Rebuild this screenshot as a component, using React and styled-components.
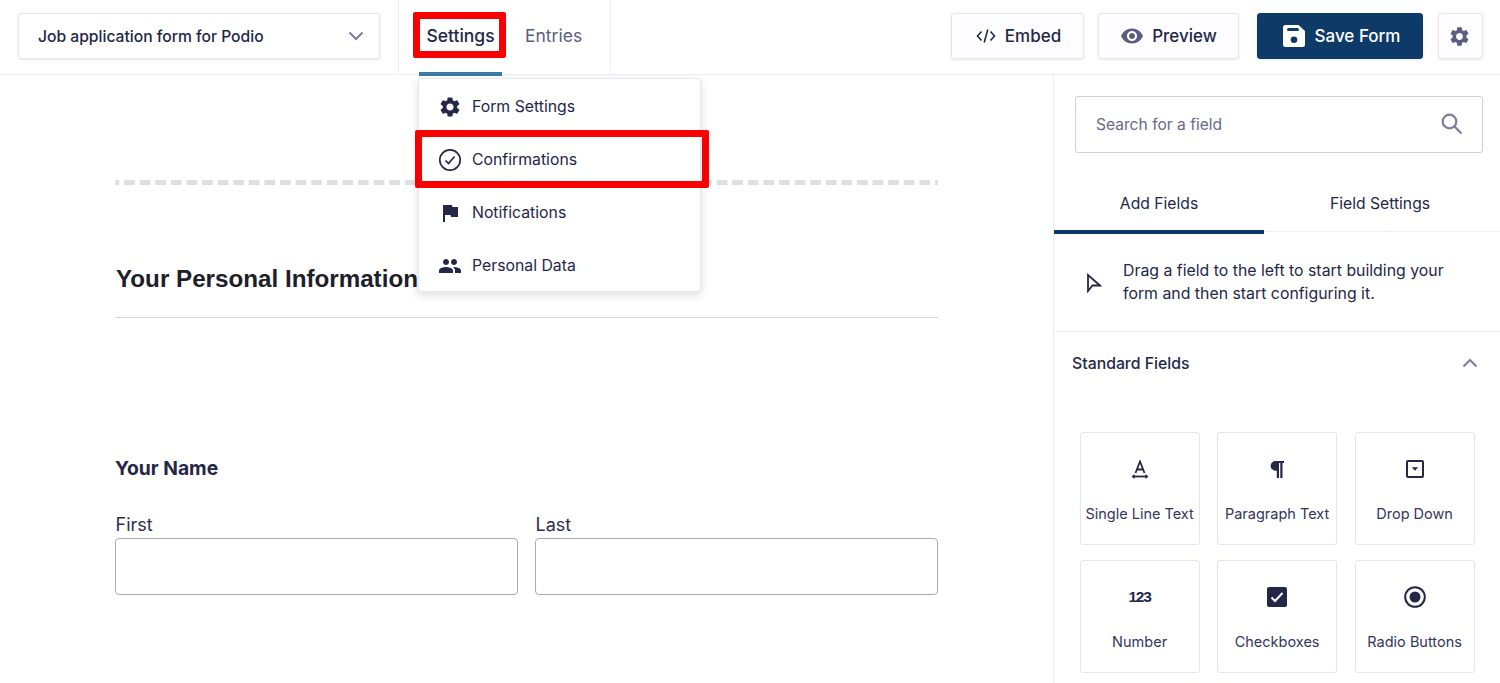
import React from "react";
import styled, { createGlobalStyle } from "styled-components";
import { MdSettings, MdFlag, MdPeople, MdVisibility } from "react-icons/md";

const INK = "#242748";
const MUTED = "#5b5e80";
const SOFT = "#7b7d9c";
const LINE = "#ecedf8";
const NAVY = "#0e3a68";
const RED = "#fa0000";

const GlobalStyle = createGlobalStyle`
  * { box-sizing: border-box; }
  html, body { margin: 0; padding: 0; background: #fff; }
  body {
    font-family: Inter, "Liberation Sans", sans-serif;
    color: ${INK};
    overflow: hidden;
  }
`;

const Page = styled.div`
  width: 1500px;
  height: 683px;
  overflow: hidden;
  display: flex;
  flex-direction: column;
`;

const Header = styled.header`
  height: 75px;
  flex: none;
  display: flex;
  align-items: stretch;
  border-bottom: 1px solid ${LINE};
  padding: 0 17px 0 18px;
`;

const FormSelect = styled.div`
  width: 362px;
  height: 46px;
  margin-top: 13px;
  padding: 0 15px 0 19px;
  display: flex;
  align-items: center;
  justify-content: space-between;
  background: #fff;
  border: 1px solid #e4e5ef;
  border-radius: 3px;
  box-shadow: 0 1px 3px rgba(40, 43, 80, 0.1);
  font-size: 15.65px;
  font-weight: 500;
`;

const Nav = styled.nav`
  position: relative;
  width: 213px;
  margin-left: 18px;
  padding-left: 20px;
  display: flex;
  align-items: stretch;
  border-left: 1px solid ${LINE};
  border-right: 1px solid ${LINE};
`;

const NavTab = styled.div`
  position: relative;
  flex: none;
  width: ${(p) => (p.$active ? "83px" : "auto")};
  margin-right: 23px;
  padding-bottom: 3px;
  display: flex;
  align-items: center;
  justify-content: center;
  font-size: 17.5px;
  font-weight: ${(p) => (p.$active ? 500 : 400)};
  color: ${(p) => (p.$active ? INK : MUTED)};
  ${(p) => p.$active && "border-bottom: 4px solid #3b7ba8; padding-bottom: 2px; height: 76px;"}
`;

const Highlight = styled.div`
  position: absolute;
  border: 7px solid ${RED};
  border-radius: 2px;
  pointer-events: none;
  z-index: 5;
`;

const TabHighlight = styled(Highlight)`
  left: -6px;
  top: 12px;
  width: 93px;
  height: 46px;
`;

const Menu = styled.div`
  position: absolute;
  left: 19px;
  top: 78px;
  width: 283px;
  height: 214px;
  padding-top: 1px;
  background: #fff;
  border: 1px solid #e6e7f0;
  border-radius: 3px;
  box-shadow: 0 3px 8px rgba(40, 43, 80, 0.16);
  z-index: 4;
`;

const MenuItem = styled.div`
  height: 53px;
  padding-left: 19px;
  display: flex;
  align-items: center;
  gap: 10px;
  font-size: 15.8px;
  color: ${INK};
  svg { flex: none; }
`;

const MenuHighlight = styled(Highlight)`
  left: -4px;
  top: 51px;
  width: 294px;
  height: 58px;
`;

const Actions = styled.div`
  margin-left: auto;
  display: flex;
  align-items: flex-start;
  padding-top: 13px;
`;

const Button = styled.button`
  height: 46px;
  width: ${(p) => p.$w}px;
  margin-left: ${(p) => p.$ml}px;
  padding: 0 ${(p) => p.$pr || 0}px 0 ${(p) => p.$pl || 0}px;
  display: flex;
  align-items: center;
  justify-content: center;
  gap: ${(p) => p.$gap || 8}px;
  background: ${(p) => (p.$primary ? NAVY : "#fdfdff")};
  color: ${(p) => (p.$primary ? "#fff" : INK)};
  border: 1px solid ${(p) => (p.$primary ? NAVY : "#e4e5ef")};
  border-radius: 3px;
  box-shadow: 0 1px 3px rgba(40, 43, 80, 0.1);
  font-family: inherit;
  font-size: 17px;
  font-weight: 500;
`;

const Body = styled.div`
  flex: 1;
  display: flex;
  min-height: 0;
`;

const Canvas = styled.main`
  width: 1053px;
  flex: none;
  padding: 105px 115px 0;
`;

const DashedLine = styled.div`
  height: 5px;
  background: linear-gradient(to right, #dfdfe2 11px, transparent 11px) -6.5px 0 / 15.6px 100% repeat-x;
`;

const SectionTitle = styled.h2`
  margin: 79px 0 0;
  padding: 0 0 23px 1px;
  height: 54px;
  line-height: 30px;
  font-family: "Liberation Sans", Arial, sans-serif;
  font-size: 24.2px;
  font-weight: 700;
  color: #1d2029;
  border-bottom: 1px solid #d6d7dd;
`;

const FieldLabel = styled.div`
  margin-top: 138px;
  line-height: 24px;
  font-size: 19.3px;
  font-weight: 700;
`;

const NameRow = styled.div`
  margin-top: 33px;
  display: grid;
  grid-template-columns: 403px 403px;
  column-gap: 17px;
`;

const NameLabel = styled.div`
  font-size: 18px;
  line-height: 24px;
  height: 25px;
  padding-left: 0.5px;
  color: #2c2f4e;
`;

const TextBox = styled.div`
  height: 57px;
  border: 1px solid #a8a9bb;
  border-radius: 4px;
`;

const Sidebar = styled.aside`
  flex: 1;
  border-left: 1px solid ${LINE};
`;

const SearchBox = styled.div`
  height: 57px;
  margin: 21px 17px 0 21px;
  padding: 0 19px 1px 20px;
  display: flex;
  align-items: center;
  justify-content: space-between;
  border: 1px solid #cfd0de;
  border-radius: 3px;
  font-size: 15.6px;
  color: #686a88;
`;

const SideTabs = styled.div`
  margin-top: 22px;
  height: 57px;
  display: flex;
  border-bottom: 1px solid ${LINE};
`;

const SideTab = styled.div`
  width: ${(p) => p.$w}px;
  height: ${(p) => (p.$active ? 59 : 56)}px;
  display: flex;
  align-items: center;
  justify-content: center;
  font-size: 15.7px;
  ${(p) => p.$active && `padding-top: 1px; border-bottom: 4px solid ${NAVY};`}
`;

const Hint = styled.div`
  height: 100px;
  padding: 27px 0 0 32px;
  display: flex;
  gap: 21px;
  border-bottom: 1px solid ${LINE};
  font-size: 15.85px;
  line-height: 23px;
  svg { margin-top: 14px; flex: none; }
`;

const GroupHeader = styled.div`
  height: 63px;
  padding: 0 22px 1px 18px;
  display: flex;
  align-items: center;
  justify-content: space-between;
  font-size: 15.8px;
  font-weight: 500;
`;

const FieldGrid = styled.div`
  margin: 37px 25px 0 25.6px;
  display: grid;
  grid-template-columns: 120px 120px 120px;
  grid-auto-rows: 113px;
  column-gap: 17.5px;
  row-gap: 15px;
`;

const FieldCard = styled.div`
  display: flex;
  flex-direction: column;
  align-items: center;
  border: 1px solid #e3e4f0;
  border-radius: 3px;
  font-size: 14.5px;
  color: #33365a;
  white-space: nowrap;
`;

const FieldIcon = styled.div`
  height: 72px;
  width: 100%;
  display: flex;
  align-items: center;
  justify-content: center;
  color: ${INK};
`;

const NumberGlyph = styled.span`
  font-family: "Liberation Sans", sans-serif;
  font-size: 15.5px;
  font-weight: 700;
  letter-spacing: -1.2px;
`;

const Chevron = ({ up }) => (
  <svg width="16" height="10" viewBox="0 0 16 10" fill="none" stroke={SOFT} strokeWidth="2">
    <path d={up ? "M1.500 8.500 8 2l6.500 6.500" : "M1.500 1.500 8 8l6.500-6.500"} />
  </svg>
);

const CheckCircle = () => (
  <svg width="24" height="24" viewBox="0 0 24 24" fill="none" stroke={INK} strokeWidth="1.700">
    <circle cx="12" cy="12" r="10.200" />
    <path d="m7.500 12.500 3 3 6-7" />
  </svg>
);

const CodeIcon = () => (
  <svg width="20" height="16" viewBox="0 0 20 16" fill="none" stroke={INK} strokeWidth="1.600">
    <path d="M5.500 3.500 1.500 8l4 4.500M14.500 3.500l4 4.500-4 4.500M11.800 1.500 8.200 14.500" />
  </svg>
);

const SaveIcon = () => (
  <svg width="22" height="22" viewBox="0 0 22 22">
    <path
      fill="#fff"
      fillRule="evenodd"
      d="M2.500 0h13L22 6v13.500a2.500 2.500 0 0 1-2.500 2.500h-17A2.500 2.500 0 0 1 0 19.500v-17A2.500 2.500 0 0 1 2.500 0ZM5.500 3a1.500 1.500 0 0 0 0 3h9a1.500 1.500 0 0 0 0-3h-9ZM11 11.500a3.300 3.300 0 1 0 0 6.600 3.300 3.300 0 0 0 0-6.600Z"
    />
  </svg>
);

const SearchIcon = () => (
  <svg width="22" height="22" viewBox="0 0 22 22" fill="none" stroke={SOFT} strokeWidth="2.200">
    <circle cx="8.500" cy="8.500" r="6.800" />
    <path d="m13.500 13.500 7 7" />
  </svg>
);

const CursorIcon = () => (
  <svg width="16" height="20" viewBox="0 0 16 20" fill="none" stroke={INK} strokeWidth="1.800">
    <path d="M2 2v16l4.500-5.500H14Z" />
  </svg>
);

const SingleLineIcon = () => (
  <svg width="18" height="19" viewBox="0 0 18 19" fill="none" stroke={INK} strokeWidth="1.800">
    <path d="M4.500 13 9 1.500 13.500 13M6 9.500h6" />
    <path d="M2 16.500h14" />
    <path d="M3.500 14v5L.5 16.500ZM14.500 14v5l3-2.500Z" fill={INK} stroke="none" />
  </svg>
);

const PilcrowIcon = () => (
  <svg width="14" height="17" viewBox="0 0 14 17">
    <path fill={INK} d="M5.500 0H14v2h-1.500v15h-2.200V2H9v15H6.800V9.800h-1.300a4.900 4.900 0 0 1 0-9.800Z" />
  </svg>
);

const DropDownIcon = () => (
  <svg width="18" height="18" viewBox="0 0 18 18" fill="none">
    <rect x="1" y="1" width="16" height="16" rx="1" stroke={INK} strokeWidth="2" />
    <path d="M5.800 7.200h6.400L9 10.800Z" fill={INK} />
  </svg>
);

const CheckboxIcon = () => (
  <svg width="20" height="20" viewBox="0 0 20 20">
    <rect width="20" height="20" rx="2" fill={INK} />
    <path d="m4.500 10.500 3.500 3.500 7.500-8" fill="none" stroke="#fff" strokeWidth="2" />
  </svg>
);

const RadioIcon = () => (
  <svg width="22" height="22" viewBox="0 0 22 22" fill="none">
    <circle cx="11" cy="11" r="9.800" stroke={INK} strokeWidth="2" />
    <circle cx="11" cy="11" r="5.500" fill={INK} />
  </svg>
);

const menuItems = [
  { label: "Form Settings", icon: <MdSettings size={24} color={INK} /> },
  { label: "Confirmations", icon: <CheckCircle /> },
  { label: "Notifications", icon: <MdFlag size={24} color={INK} /> },
  { label: "Personal Data", icon: <MdPeople size={24} color={INK} /> },
];

const fields = [
  { label: "Single Line Text", icon: <SingleLineIcon /> },
  { label: "Paragraph Text", icon: <PilcrowIcon /> },
  { label: "Drop Down", icon: <DropDownIcon /> },
  { label: "Number", icon: <NumberGlyph>123</NumberGlyph> },
  { label: "Checkboxes", icon: <CheckboxIcon /> },
  { label: "Radio Buttons", icon: <RadioIcon /> },
];

export default function App() {
  return (
    <Page>
      <GlobalStyle />
      <Header>
        <FormSelect>
          Job application form for Podio
          <Chevron />
        </FormSelect>
        <Nav>
          <NavTab $active>
            Settings
            <TabHighlight />
          </NavTab>
          <NavTab>Entries</NavTab>
          <Menu>
            {menuItems.map((item) => (
              <MenuItem key={item.label}>
                {item.icon}
                {item.label}
              </MenuItem>
            ))}
            <MenuHighlight />
          </Menu>
        </Nav>
        <Actions>
          <Button $w={133} $ml={0} $pl={2} $gap={9}>
            <CodeIcon />
            Embed
          </Button>
          <Button $w={141} $ml={14}>
            <MdVisibility size={24} color={MUTED} />
            Preview
          </Button>
          <Button $w={166} $ml={18} $primary $gap={10} $pl={3}>
            <SaveIcon />
            Save Form
          </Button>
          <Button $w={45} $ml={15} $pr={2}>
            <MdSettings size={23} color={MUTED} />
          </Button>
        </Actions>
      </Header>
      <Body>
        <Canvas>
          <DashedLine />
          <SectionTitle>Your Personal Information</SectionTitle>
          <FieldLabel>Your Name</FieldLabel>
          <NameRow>
            <div>
              <NameLabel>First</NameLabel>
              <TextBox />
            </div>
            <div>
              <NameLabel>Last</NameLabel>
              <TextBox />
            </div>
          </NameRow>
        </Canvas>
        <Sidebar>
          <SearchBox>
            Search for a field
            <SearchIcon />
          </SearchBox>
          <SideTabs>
            <SideTab $active $w={210}>Add Fields</SideTab>
            <SideTab $w={232}>Field Settings</SideTab>
          </SideTabs>
          <Hint>
            <CursorIcon />
            <div>
              Drag a field to the left to start building your
              <br />
              form and then start configuring it.
            </div>
          </Hint>
          <GroupHeader>
            Standard Fields
            <Chevron up />
          </GroupHeader>
          <FieldGrid>
            {fields.map((field) => (
              <FieldCard key={field.label}>
                <FieldIcon>{field.icon}</FieldIcon>
                {field.label}
              </FieldCard>
            ))}
          </FieldGrid>
        </Sidebar>
      </Body>
    </Page>
  );
}
